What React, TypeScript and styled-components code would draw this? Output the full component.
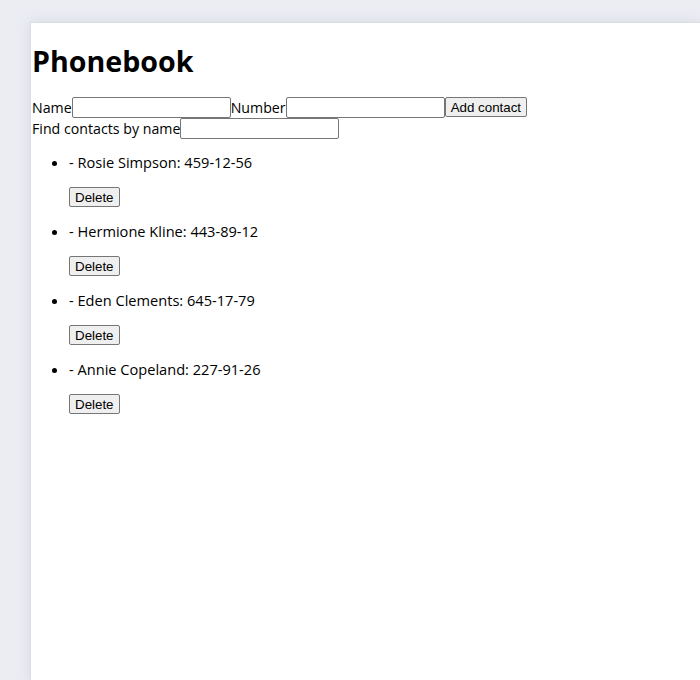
import { useState } from 'react'
import styled, { createGlobalStyle } from 'styled-components'

const GlobalStyle = createGlobalStyle`
  html, body {
    margin: 0;
    background: #ebedf3;
  }
  body {
    font-family: 'Open Sans', 'Noto Sans', sans-serif;
    font-size: 14.6px;
    color: #000;
  }
`

type Contact = { id: string; name: string; number: string }

const initialContacts: Contact[] = [
  { id: 'id-1', name: 'Rosie Simpson', number: '459-12-56' },
  { id: 'id-2', name: 'Hermione Kline', number: '443-89-12' },
  { id: 'id-3', name: 'Eden Clements', number: '645-17-79' },
  { id: 'id-4', name: 'Annie Copeland', number: '227-91-26' },
]

function App() {
  const [contacts, setContacts] = useState(initialContacts)
  const [name, setName] = useState('')
  const [number, setNumber] = useState('')
  const [filter, setFilter] = useState('')

  const addContact = (e: React.FormEvent) => {
    e.preventDefault()
    if (!name.trim()) return
    setContacts([...contacts, { id: `id-${Date.now()}`, name, number }])
    setName('')
    setNumber('')
  }

  const visible = contacts.filter((c) =>
    c.name.toLowerCase().includes(filter.toLowerCase())
  )

  return (
    <>
      <GlobalStyle />
      <Page>
        <Panel>
          <Title>Phonebook</Title>
          <Form onSubmit={addContact}>
            <Label>
              Name
              <Input value={name} onChange={(e) => setName(e.target.value)} />
            </Label>
            <Label>
              Number
              <Input value={number} onChange={(e) => setNumber(e.target.value)} />
            </Label>
            <Button type="submit">Add contact</Button>
          </Form>
          <Label>
            Find contacts by name
            <Input value={filter} onChange={(e) => setFilter(e.target.value)} />
          </Label>
          <List>
            {visible.map((c) => (
              <Item key={c.id}>
                <ItemText>
                  - {c.name}: {c.number}
                </ItemText>
                <DeleteButton
                  onClick={() => setContacts(contacts.filter((x) => x.id !== c.id))}
                >
                  Delete
                </DeleteButton>
              </Item>
            ))}
          </List>
        </Panel>
      </Page>
    </>
  )
}

export default App

const Page = styled.div`
  padding: 22px 0 0 30px;
  height: 680px;
  box-sizing: border-box;
  overflow: hidden;
`

const Panel = styled.div`
  background: #fff;
  height: 100%;
  border-top: 1px solid #dcdde2;
  border-left: 1px solid #dcdde2;
  box-shadow: 0 0 12px rgba(120, 125, 145, 0.18);
  padding-left: 1px;
`

const Title = styled.h1`
  font-size: 28.6px;
  font-weight: 700;
  line-height: 40px;
  margin: 18px 0 16px;
`

const Form = styled.form`
  display: block;
  line-height: 21px;
`

const Label = styled.label`
  font-size: 14.2px;
  line-height: 21px;
`

const Input = styled.input`
  box-sizing: border-box;
  width: 159px;
  height: 21px;
  margin: 0;
  padding: 1px 2px;
  border: 1px solid #767676;
  border-radius: 2px;
  font-family: 'Liberation Sans', Arial, sans-serif;
  font-size: 13.33px;
  vertical-align: top;
  background: #fff;
`

const Button = styled.button`
  box-sizing: border-box;
  height: 20px;
  margin: 0;
  padding: 0 5px;
  border: 1px solid #767676;
  border-radius: 2px;
  background: #efefef;
  font-family: 'Liberation Sans', Arial, sans-serif;
  font-size: 13.33px;
  color: #000;
  vertical-align: top;
  cursor: pointer;
`

const List = styled.ul`
  margin: 13px 0 0;
  padding-left: 37px;
`

const Item = styled.li`
  padding-bottom: 14px;
`

const ItemText = styled.p`
  margin: 0;
  line-height: 21px;
`

const DeleteButton = styled(Button)`
  display: block;
  margin-top: 14px;
`
